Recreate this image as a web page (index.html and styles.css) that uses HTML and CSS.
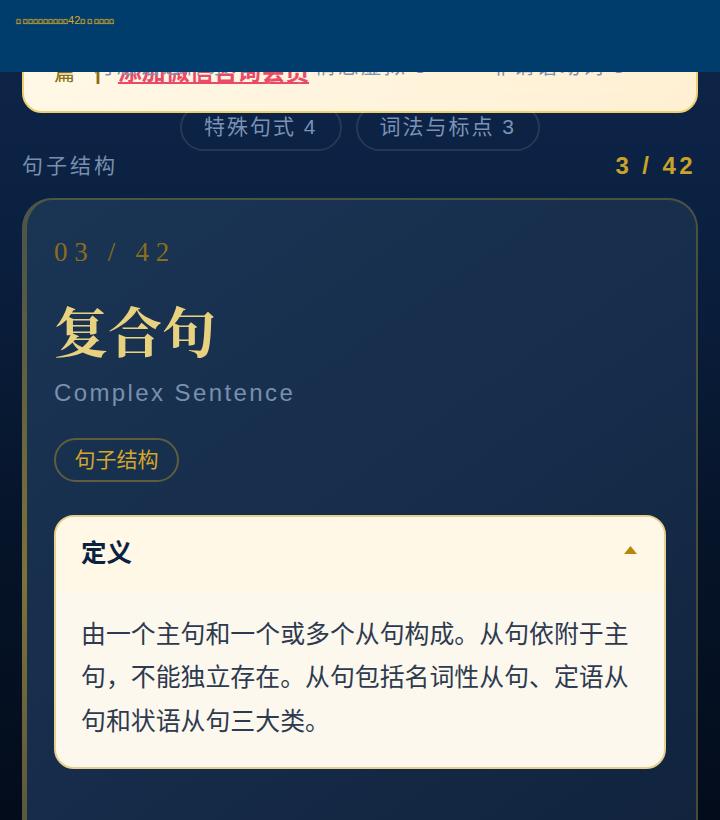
FILE: index.html
```html
<!DOCTYPE html>
<html lang="zh-CN">
<head>
<meta charset="utf-8">
<title>句子结构</title>
<link rel="stylesheet" href="styles.css">
</head>
<body>
<header class="topbar"><span class="topbar-text">&#xE000; &#xE000;&#xE000;&#xE000;&#xE000;&#xE000;&#xE000;&#xE000;&#xE000;&#xE000;<span class="topbar-num">42</span>&#xE000; &#xE000; &#xE000;&#xE000;&#xE000;&#xE000;</span></header>
<main class="page">
  <div class="banner">
    <div class="banner-line"><span class="banner-brown">篇</span><span class="banner-sep">|</span><a class="banner-link" href="#">添加微信咨询会员</a></div>
  </div>
  <nav class="chips">
    <span class="chip">时态语态体系 8</span>
    <span class="chip">情态虚拟 5</span>
    <span class="chip">非谓语动词 5</span>
    <span class="chip">特殊句式 4</span>
    <span class="chip">词法与标点 3</span>
  </nav>
  <div class="section-row">
    <span class="section-name">句子结构</span>
    <span class="section-count">3 / 42</span>
  </div>
  <article class="card">
    <div class="card-index">03 / 42</div>
    <h1 class="card-title">复合句</h1>
    <div class="card-en">Complex Sentence</div>
    <span class="card-tag">句子结构</span>
    <section class="panel">
      <div class="panel-head">
        <span class="panel-title">定义</span>
        <svg class="panel-caret" viewBox="0 0 13 8" aria-hidden="true"><path d="M6.5 0 13 8H0Z"/></svg>
      </div>
      <p class="panel-body">由一个主句和一个或多个从句构成。从句依附于主句，不能独立存在。从句包括名词性从句、定语从句和状语从句三大类。</p>
    </section>
  </article>
</main>
</body>
</html>
```
FILE: styles.css
```css
* { box-sizing: border-box; }
html, body { margin: 0; height: 820px; overflow: hidden; }
body {
  background: linear-gradient(180deg, #10264a 0%, #0b2142 25%, #061429 65%, #030c1b 100%);
  font-family: "Liberation Sans", "Noto Sans CJK SC", sans-serif;
}
.topbar {
  position: fixed;
  top: 0; left: 0; right: 0;
  height: 72px;
  background: #003d6d;
  z-index: 5;
  padding: 13px 16px 0;
}
.topbar-text {
  display: block;
  font-size: 6.7px;
  line-height: 14px;
  color: #f0b820;
  text-shadow: 0 0 1px #f0b820, 0 0 1px #f0b820, 0 0 1px #f0b820;
  white-space: pre;
}
.topbar-num {
  font-size: 11px;
  font-family: "Liberation Sans", sans-serif;
  color: #d9a522;
  text-shadow: none;
}
.page {
  position: relative;
  padding-top: 43px;
  height: 820px;
  overflow: hidden;
}
.banner {
  position: absolute;
  top: 20px; left: 22px; right: 22px;
  height: 93px;
  padding: 35px 30px 0;
  border: 2px solid #ecd072;
  border-radius: 20px;
  background: linear-gradient(135deg, #fff9e8, #fff0d2);
}
.banner-line {
  display: flex;
  align-items: baseline;
  font-size: 21px;
  line-height: 30px;
}
.banner-brown { color: #8a6a14; }
.banner-sep { color: #8a6a14; margin-left: 20px; margin-right: 17px; font-weight: 700; }
.banner-link {
  color: #ea4a68;
  font-weight: 700;
  font-size: 23.9px;
  text-decoration: underline;
}
.chips {
  position: relative;
  display: flex;
  flex-wrap: wrap;
  justify-content: center;
  gap: 14px;
  padding: 0 20px;
}
.chip {
  height: 47px;
  padding: 0 22px;
  border: 2px solid rgba(255, 255, 255, 0.1);
  border-radius: 24px;
  color: #7a92b6;
  font-size: 21px;
  letter-spacing: 2px;
  line-height: 41px;
  white-space: nowrap;
}
.section-row {
  display: flex;
  justify-content: space-between;
  align-items: center;
  height: 30px;
  padding: 0 24px 0 22px;
}
.section-name {
  color: #7a8fae;
  font-size: 21px;
  letter-spacing: 3px;
  padding-bottom: 4px;
}
.section-count {
  color: #c9a227;
  font-family: "Liberation Sans", sans-serif;
  font-weight: 700;
  font-size: 24px;
  letter-spacing: 3.4px;
}
.card {
  position: relative;
  margin: 17px 22px 0;
  height: 760px;
  padding: 37px 30px 0 27px;
  border: 2px solid rgba(201, 162, 39, 0.3);
  border-left-width: 5px;
  border-radius: 30px;
  background: linear-gradient(145deg, #1a3554 0%, #162c4a 50%, #10213a 100%);
  background-origin: border-box;
}
.card::before {
  content: "";
  position: absolute;
  top: 40px;
  bottom: 40px;
  left: -5px;
  width: 5px;
  background: linear-gradient(180deg, transparent, rgba(201, 162, 39, 0.4) 50%, transparent);
}
.card-index {
  font-family: "Liberation Serif", serif;
  color: #8b6d1c;
  font-size: 27px;
  line-height: 30px;
  letter-spacing: 6.7px;
}
.card-title {
  margin: 25px 0 0;
  font-family: "Noto Serif CJK SC", "Liberation Serif", serif;
  font-size: 54px;
  font-weight: 700;
  line-height: 76px;
  color: #e9d27f;
}
.card-en {
  font-family: "Liberation Sans", sans-serif;
  margin-top: 10px;
  color: #7a8fae;
  font-size: 24px;
  line-height: 30px;
  letter-spacing: 2.4px;
}
.card-tag {
  display: inline-block;
  margin-top: 30px;
  height: 44px;
  padding: 0 18.5px;
  border: 2px solid rgba(201, 162, 39, 0.4);
  border-radius: 22px;
  color: #d4a72c;
  font-size: 21px;
  line-height: 40px;
}
.panel {
  margin-top: 33px;
  border: 2px solid #e8cf8e;
  border-radius: 20px;
  overflow: hidden;
  background: #fcf8ee;
}
.panel-head {
  display: flex;
  justify-content: space-between;
  align-items: center;
  height: 74px;
  padding: 0 27px 0 25px;
  background: #fff8e6;
}
.panel-title {
  color: #0a2240;
  font-size: 25.5px;
  font-weight: 700;
  margin-bottom: 8px;
}
.panel-caret {
  width: 13px;
  height: 8px;
  fill: #b8860b;
  margin-bottom: 8px;
}
.panel-body {
  margin: 0;
  padding: 22px 25px 24px;
  color: #2d3a4f;
  font-size: 24.9px;
  line-height: 43.4px;
}
```
